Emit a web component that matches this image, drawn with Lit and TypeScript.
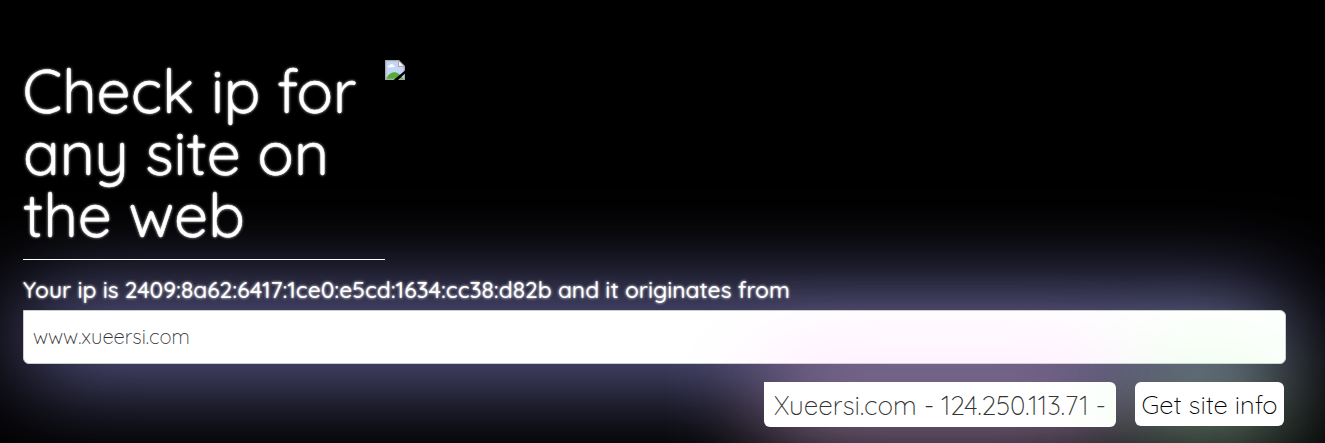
import { LitElement, html, css } from "lit";
import { customElement, property } from "lit/decorators.js";

@customElement("missing-image")
class MissingImage extends LitElement {
  static styles = css`
    :host { display: block; width: 20px; height: 20px; }
    svg { display: block; }
  `;
  render() {
    return html`<svg width="20" height="20" viewBox="0 0 20 20">
      <path d="M0 0H14L20 6V20H0Z" fill="#a9a9a9" />
      <path d="M1.3 1.3H13V7H18.7V18.7H1.3Z" fill="#c3d6f7" />
      <path d="M14 1.5V6H18.5Z" fill="#f4f4f4" />
      <path d="M2.8 7.2C2.6 5.8 4 5 5 5.2C5.4 3.6 7.6 3.6 8 5.1C9.4 5 9.9 6.4 9.6 7.2Z" fill="#fff" />
      <path d="M1.3 18.7C3 14.5 6 12.2 9.6 12.2C12 12.2 14 13.5 15.5 15.5L18.7 18.7Z" fill="#56ab34" />
      <path d="M20 10.6V13.6L13 20H8.6Z" fill="#000" />
    </svg>`;
  }
}

@customElement("app-root")
class AppRoot extends LitElement {
  @property() site = "www.xueersi.com";
  @property() ip = "2409:8a62:6417:1ce0:e5cd:1634:cc38:d82b";
  @property() result = "Xueersi.com - 124.250.113.71 -";

  static styles = css`
    :host {
      display: block;
      box-sizing: border-box;
      height: 443px;
      overflow: hidden;
      padding: 60px 39px 0 23px;
      background: #000;
      color: #fff;
      font-family: "Quicksand", "Lato", sans-serif;
    }
    * { box-sizing: border-box; }
    .hero { display: flex; align-items: flex-start; }
    h1 {
      width: 362px;
      height: 201px;
      margin: -1px 0 0;
      border-bottom: 1px solid #fff;
      font-size: 60.6px;
      line-height: 62px;
      font-weight: 400;
      text-indent: -0.4px;
      letter-spacing: -0.05px;
      -webkit-text-stroke: 0.3px #fff;
      text-shadow: 0 0 3px #fff;
    }
    .origin {
      margin: 0;
      height: 50px;
      padding-top: 16px;
      font-size: 22.74px;
      line-height: 28px;
      font-weight: 500;
      white-space: nowrap;
      text-shadow: 0 0 3px #fff;
    }
    .site {
      display: block;
      width: 1263px;
      height: 54px;
      padding: 0 9px 2px;
      margin: 0;
      border: 1px solid #ccc;
      border-radius: 0 6px 6px 6px;
      outline: none;
      background: #fff;
      color: #333;
      font: 300 20.2px "Quicksand", "Lato", sans-serif;
      box-shadow: 0 0 100px #a6a4ff;
    }
    .actions {
      display: flex;
      flex-direction: row-reverse;
      gap: 19px;
      width: 1261px;
      margin-top: 18px;
    }
    button {
      width: 149px;
      height: 44px;
      padding: 0;
      border: 0;
      border-radius: 6px;
      background: #fff;
      color: #000;
      font: 300 25.6px "Quicksand", "Lato", sans-serif;
      box-shadow: 0 0 100px #cfc;
    }
    .result {
      width: 352px;
      height: 45px;
      padding-left: 10px;
      border-radius: 0 6px 6px 6px;
      background: #fff;
      color: #333;
      font-size: 26.1px;
      line-height: 47px;
      font-weight: 300;
      white-space: nowrap;
      box-shadow: 0 0 100px #fcf;
    }
    .hero, .origin { position: relative; z-index: 1; }
  `;

  render() {
    return html`
      <div class="hero">
        <h1>Check ip for any site on the web</h1>
        <missing-image></missing-image>
      </div>
      <p class="origin">Your ip is ${this.ip} and it originates from</p>
      <input class="site" .value=${this.site} />
      <div class="actions">
        <button>Get site info</button>
        <div class="result">${this.result}</div>
      </div>
    `;
  }
}
